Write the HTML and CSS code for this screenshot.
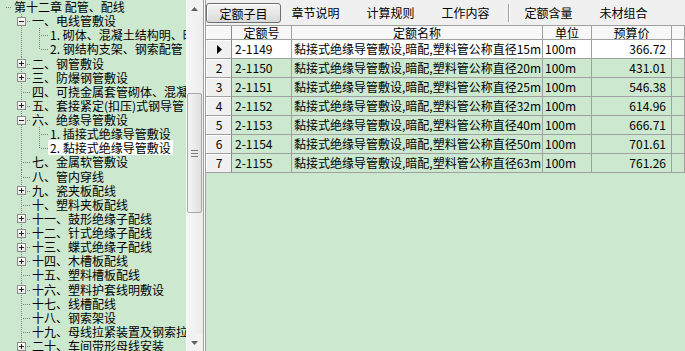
FILE: index.html
```html
<!DOCTYPE html>
<html>
  <head>
    <meta charset="UTF-8" />
    <title>定额子目</title>
    <link rel="stylesheet" href="styles.css">
  </head>
  <body>
    <div class="app">
      <!-- 左侧章节树 -->
      <div class="left">
        <div class="tree">
          <div class="node"><span class="rootline"></span><span class="label">第十二章 配管、配线</span></div>
          <div class="node"><span class="ind"></span><span class="g tee"><span class="box minus"></span></span><span class="label">一、电线管敷设</span></div>
          <div class="node"><span class="ind"></span><span class="g pipe"></span><span class="g tee"></span><span class="label">1. 砌体、混凝土结构明、暗配</span></div>
          <div class="node"><span class="ind"></span><span class="g pipe"></span><span class="g elbow"></span><span class="label">2. 钢结构支架、钢索配管</span></div>
          <div class="node"><span class="ind"></span><span class="g tee"><span class="box"></span></span><span class="label">二、钢管敷设</span></div>
          <div class="node"><span class="ind"></span><span class="g tee"><span class="box"></span></span><span class="label">三、防爆钢管敷设</span></div>
          <div class="node"><span class="ind"></span><span class="g tee"></span><span class="label">四、可挠金属套管砌体、混凝土</span></div>
          <div class="node"><span class="ind"></span><span class="g tee"><span class="box"></span></span><span class="label">五、套接紧定(扣压)式钢导管</span></div>
          <div class="node"><span class="ind"></span><span class="g tee"><span class="box minus"></span></span><span class="label">六、绝缘导管敷设</span></div>
          <div class="node"><span class="ind"></span><span class="g pipe"></span><span class="g tee"></span><span class="label">1. 插接式绝缘导管敷设</span></div>
          <div class="node"><span class="ind"></span><span class="g pipe"></span><span class="g elbow"></span><span class="label selected">2. 黏接式绝缘导管敷设</span></div>
          <div class="node"><span class="ind"></span><span class="g tee"></span><span class="label">七、金属软管敷设</span></div>
          <div class="node"><span class="ind"></span><span class="g tee"></span><span class="label">八、管内穿线</span></div>
          <div class="node"><span class="ind"></span><span class="g tee"><span class="box"></span></span><span class="label">九、瓷夹板配线</span></div>
          <div class="node"><span class="ind"></span><span class="g tee"></span><span class="label">十、塑料夹板配线</span></div>
          <div class="node"><span class="ind"></span><span class="g tee"><span class="box"></span></span><span class="label">十一、鼓形绝缘子配线</span></div>
          <div class="node"><span class="ind"></span><span class="g tee"><span class="box"></span></span><span class="label">十二、针式绝缘子配线</span></div>
          <div class="node"><span class="ind"></span><span class="g tee"><span class="box"></span></span><span class="label">十三、蝶式绝缘子配线</span></div>
          <div class="node"><span class="ind"></span><span class="g tee"><span class="box"></span></span><span class="label">十四、木槽板配线</span></div>
          <div class="node"><span class="ind"></span><span class="g tee"></span><span class="label">十五、塑料槽板配线</span></div>
          <div class="node"><span class="ind"></span><span class="g tee"><span class="box"></span></span><span class="label">十六、塑料护套线明敷设</span></div>
          <div class="node"><span class="ind"></span><span class="g tee"></span><span class="label">十七、线槽配线</span></div>
          <div class="node"><span class="ind"></span><span class="g tee"></span><span class="label">十八、钢索架设</span></div>
          <div class="node"><span class="ind"></span><span class="g tee"></span><span class="label">十九、母线拉紧装置及钢索拉紧装置</span></div>
          <div class="node"><span class="ind"></span><span class="g tee"><span class="box"></span></span><span class="label">二十、车间带形母线安装</span></div>
        </div>
        <div class="vscroll">
          <div class="arrow"><svg width="7" height="4" viewBox="0 0 7 4"><polygon points="0,4 7,4 3.5,0" fill="#606060"/></svg></div>
          <div class="track">
            <div class="thumb"><span class="grip"></span></div>
          </div>
          <div class="arrow"><svg width="7" height="4" viewBox="0 0 7 4"><polygon points="0,0 7,0 3.5,4" fill="#606060"/></svg></div>
        </div>
      </div>
      <div class="splitter"></div>
      <!-- 右侧定额列表 -->
      <div class="right">
        <div class="tabs">
          <span class="tab on">定额子目</span>
          <span class="tab">章节说明</span>
          <span class="tab">计算规则</span>
          <span class="tab">工作内容</span>
          <span class="sep"></span>
          <span class="tab">定额含量</span>
          <span class="tab">未材组合</span>
        </div>
        <div class="grid">
          <div class="row head">
            <div class="cell ind-cell"></div>
            <div class="cell">定额号</div>
            <div class="cell">定额名称</div>
            <div class="cell">单位</div>
            <div class="cell">预算价</div>
            <div class="cell"></div>
          </div>
          <div class="row current">
            <div class="cell ind-cell"><svg width="5" height="9" viewBox="0 0 5 9"><polygon points="0,0 5,4.5 0,9" fill="#000"/></svg></div>
            <div class="cell code">2-1149</div>
            <div class="cell name">黏接式绝缘导管敷设,暗配,塑料管公称直径15m</div>
            <div class="cell unit">100m</div>
            <div class="cell price">366.72</div>
            <div class="cell"></div>
          </div>
          <div class="row">
            <div class="cell ind-cell">2</div>
            <div class="cell code">2-1150</div>
            <div class="cell name">黏接式绝缘导管敷设,暗配,塑料管公称直径20m</div>
            <div class="cell unit">100m</div>
            <div class="cell price">431.01</div>
            <div class="cell"></div>
          </div>
          <div class="row">
            <div class="cell ind-cell">3</div>
            <div class="cell code">2-1151</div>
            <div class="cell name">黏接式绝缘导管敷设,暗配,塑料管公称直径25m</div>
            <div class="cell unit">100m</div>
            <div class="cell price">546.38</div>
            <div class="cell"></div>
          </div>
          <div class="row">
            <div class="cell ind-cell">4</div>
            <div class="cell code">2-1152</div>
            <div class="cell name">黏接式绝缘导管敷设,暗配,塑料管公称直径32m</div>
            <div class="cell unit">100m</div>
            <div class="cell price">614.96</div>
            <div class="cell"></div>
          </div>
          <div class="row">
            <div class="cell ind-cell">5</div>
            <div class="cell code">2-1153</div>
            <div class="cell name">黏接式绝缘导管敷设,暗配,塑料管公称直径40m</div>
            <div class="cell unit">100m</div>
            <div class="cell price">666.71</div>
            <div class="cell"></div>
          </div>
          <div class="row">
            <div class="cell ind-cell">6</div>
            <div class="cell code">2-1154</div>
            <div class="cell name">黏接式绝缘导管敷设,暗配,塑料管公称直径50m</div>
            <div class="cell unit">100m</div>
            <div class="cell price">701.61</div>
            <div class="cell"></div>
          </div>
          <div class="row">
            <div class="cell ind-cell">7</div>
            <div class="cell code">2-1155</div>
            <div class="cell name">黏接式绝缘导管敷设,暗配,塑料管公称直径63m</div>
            <div class="cell unit">100m</div>
            <div class="cell price">761.26</div>
            <div class="cell"></div>
          </div>
        </div>
      </div>
    </div>
  </body>
</html>
```

FILE: styles.css
```css
html,
body {
  margin: 0;
  width: 685px;
  height: 351px;
  overflow: hidden;
}
body {
  font-family: "Noto Sans CJK SC", "Noto Sans", sans-serif;
  font-size: 12px;
  color: #000;
  background: #f0f0f0;
}

.app {
  display: flex;
  height: 351px;
}

/* 左侧树 */
.left {
  display: flex;
  width: 203px;
  border-right: 1px solid #a0a0a0;
  flex: none;
}
.tree {
  width: 186px;
  background: #cce8cf;
  overflow: hidden;
}
.node {
  display: flex;
  height: 14.125px;
  line-height: 14px;
  white-space: nowrap;
}
.rootline {
  flex: none;
  width: 12px;
  background: repeating-linear-gradient(to right, #808080 0 1px, transparent 1px 2px) 6px 7px / 6px 1px no-repeat;
}
.ind {
  flex: none;
  width: 12px;
}
.g {
  flex: none;
  width: 18px;
  display: flex;
  align-items: center;
  padding-left: 5px;
  box-sizing: border-box;
}
.pipe {
  background: repeating-linear-gradient(to bottom, #808080 0 1px, transparent 1px 2px) 9px 0 / 1px 100% no-repeat;
}
.tee {
  background:
    repeating-linear-gradient(to right, #808080 0 1px, transparent 1px 2px) 11px 7px / 7px 1px no-repeat,
    repeating-linear-gradient(to bottom, #808080 0 1px, transparent 1px 2px) 9px 0 / 1px 100% no-repeat;
}
.elbow {
  background:
    repeating-linear-gradient(to right, #808080 0 1px, transparent 1px 2px) 11px 7px / 7px 1px no-repeat,
    repeating-linear-gradient(to bottom, #808080 0 1px, transparent 1px 2px) 9px 0 / 1px 7px no-repeat;
}
.box {
  width: 9px;
  height: 9px;
  box-sizing: border-box;
  border: 1px solid #8c8c8c;
  background:
    linear-gradient(#202020, #202020) center / 5px 1px no-repeat,
    linear-gradient(#202020, #202020) center / 1px 5px no-repeat,
    linear-gradient(#ffffff, #e6e6e6);
}
.box.minus {
  background:
    linear-gradient(#202020, #202020) center / 5px 1px no-repeat,
    linear-gradient(#ffffff, #e6e6e6);
}
.label {
  padding: 0 2px;
}
.label.selected {
  background: #fff;
  height: 15px;
  margin-top: -1px;
  line-height: 16px;
}

/* 滚动条 */
.vscroll {
  width: 17px;
  display: flex;
  flex-direction: column;
  background: #f2f2f2;
  border-left: 1px solid #fafafa;
  box-sizing: border-box;
}
.arrow {
  height: 17px;
  display: flex;
  align-items: center;
  justify-content: center;
  padding-right: 1px;
}
.track {
  flex: 1;
  background: linear-gradient(to right, #f6f6f6, #ececec);
}
.thumb {
  margin-top: 76px;
  width: 15px;
  height: 120px;
  box-sizing: border-box;
  border: 1px solid #a8a8a8;
  border-radius: 2px;
  background: linear-gradient(to right, #f4f4f4, #e0e0e0);
  display: flex;
  align-items: center;
  justify-content: center;
}
.grip {
  width: 7px;
  height: 7px;
  background: repeating-linear-gradient(to bottom, #7a7a7a 0 1px, transparent 1px 3px);
}

.splitter {
  width: 1px;
  background: #fcfcfc;
  flex: none;
}

/* 右侧 */
.right {
  flex: 1;
  display: flex;
  flex-direction: column;
  border-left: 1px solid #a0a0a0;
  background: #cce8cf;
  min-width: 0;
}
.tabs {
  height: 25px;
  flex: none;
  display: flex;
  align-items: center;
  background: #f0f0f0;
  border-bottom: 1px solid #a0a0a0;
}
.tab {
  width: 75px;
  height: 20px;
  line-height: 20px;
  text-align: center;
  flex: none;
  font-size: 12px;
}
.tab.on {
  box-sizing: border-box;
  border: 1px solid #6e6e6e;
  border-radius: 3px;
  background: linear-gradient(#f4f4f4, #d9d9d9);
  line-height: 19px;
  margin-right: -3px;
  box-shadow: inset 1px 1px #ffffff;
}
.sep {
  width: 1px;
  height: 18px;
  background: #a0a0a0;
  border-right: 1px solid #fff;
  margin: 0 1px 0 5px;
  flex: none;
}

.grid {
  flex: none;
}
.row {
  display: grid;
  grid-template-columns: 26px 60px 251px 49px 80px 1fr;
  height: 19px;
  background: #cce8cf;
}
.row.head {
  height: 14px;
  background: #f7f7f7;
}
.row.current {
  background: #ffffff;
}
.cell {
  box-sizing: border-box;
  border-right: 1px solid #a0a0a0;
  border-bottom: 1px solid #a0a0a0;
  white-space: nowrap;
  overflow: hidden;
  line-height: 18px;
  padding: 0 3px;
}
.head .cell {
  line-height: 13px;
  text-align: center;
}
.ind-cell {
  background: #f0f0f0;
  text-align: center;
  border-right-color: #8a8a8a;
  box-shadow: inset 1px 1px #ffffff;
  display: flex;
  align-items: center;
  justify-content: center;
  padding: 0 0 0 1px;
}
.head .ind-cell {
  background: #f7f7f7;
}
.name {
  padding: 0 1px 0 2px;
}
.unit {
  padding-left: 2px;
}
.price {
  text-align: right;
  padding-right: 5px;
}
```
